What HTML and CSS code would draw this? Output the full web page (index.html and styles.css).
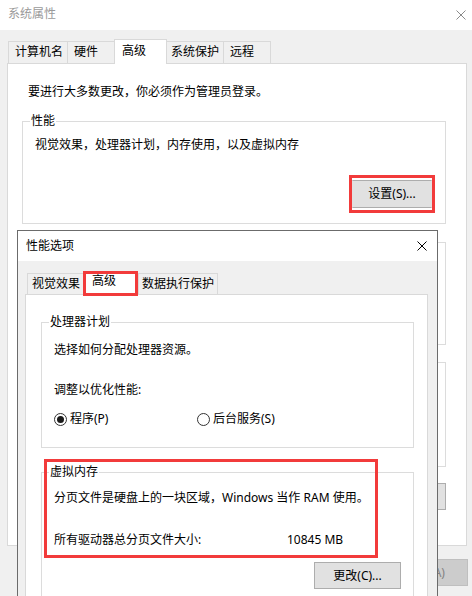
FILE: index.html
```html
<!DOCTYPE html>
<html lang="zh-CN">
<head>
<meta charset="utf-8">
<title>系统属性</title>
<link rel="stylesheet" href="styles.css">
</head>
<body>
<div class="win">
  <div class="titlebar">
    <span class="title">系统属性</span>
    <svg class="x x-dim" width="10" height="10" viewBox="0 0 10 10"><path d="M0.5 0.5L9.5 9.5M9.5 0.5L0.5 9.5"/></svg>
  </div>
  <div class="winbody">
    <div class="tabs">
      <div class="tab w1">计算机名</div>
      <div class="tab w2">硬件</div>
      <div class="tab on w3">高级</div>
      <div class="tab w4">系统保护</div>
      <div class="tab w5">远程</div>
    </div>
    <div class="panel">
      <p class="note">要进行大多数更改，你必须作为管理员登录。</p>
      <fieldset class="group">
        <legend>性能</legend>
        <div class="gbody">
          <p class="line">视觉效果，处理器计划，内存使用，以及虚拟内存</p>
          <div class="actions">
            <span class="hl"><button class="btn btn-set">设置(S)...</button></span>
          </div>
        </div>
      </fieldset>
      <div class="box box-profile"></div>
      <div class="box box-startup"></div>
      <div class="env-row">
        <button class="btn btn-env" aria-label="环境变量"></button>
      </div>
    </div>
    <div class="footer">
      <button class="btn btn-foot disabled">应用(A)</button>
    </div>
  </div>
</div>

<div class="dialog">
  <div class="dtitle">
    <span>性能选项</span>
    <svg class="x" width="10" height="10" viewBox="0 0 10 10"><path d="M0.5 0.5L9.5 9.5M9.5 0.5L0.5 9.5"/></svg>
  </div>
  <div class="dbody">
    <div class="dtabs">
      <div class="dtab d1">视觉效果</div>
      <div class="dtab hlt">高级</div>
      <div class="dtab d3">数据执行保护</div>
    </div>
    <div class="dpanel">
      <fieldset class="group">
        <legend>处理器计划</legend>
        <div class="gbody cpu">
          <p class="line">选择如何分配处理器资源。</p>
          <p class="line mt24">调整以优化性能:</p>
          <div class="radios">
            <label class="radio"><span class="rb on"></span>程序(P)</label>
            <label class="radio"><span class="rb"></span>后台服务(S)</label>
          </div>
        </div>
      </fieldset>
      <fieldset class="group mt16">
        <legend>虚拟内存</legend>
        <div class="gbody vm">
          <p class="line">分页文件是硬盘上的一块区域，Windows 当作 RAM 使用。</p>
          <div class="size-row">
            <span>所有驱动器总分页文件大小:</span>
            <span>10845 MB</span>
          </div>
          <div class="vm-actions">
            <button class="btn btn-change">更改(C)...</button>
          </div>
        </div>
      </fieldset>
    </div>
  </div>
  <div class="mark"></div>
</div>
</body>
</html>
```
FILE: styles.css
```css
* {
  box-sizing: border-box;
}

html,
body {
  margin: 0;
  padding: 0;
}

body {
  width: 472px;
  height: 596px;
  overflow: hidden;
  position: relative;
  background: #f0f0f0;
  color: #000;
  font-family: "Noto Sans", "Noto Sans CJK SC", sans-serif;
  font-size: 12px;
  line-height: 16px;
}

p {
  margin: 0;
}

.x path {
  stroke: #000;
  stroke-width: 1;
  fill: none;
}

.x-dim path {
  stroke: #8a8a8a;
}

/* background window */
.titlebar {
  height: 30px;
  background: #fff;
  display: flex;
  align-items: center;
  justify-content: space-between;
  padding: 0 6px 0 8px;
}

.title {
  color: #9a9a9a;
  margin-top: -2px;
}

.winbody {
  padding: 9px 5px 0 7px;
}

.tabs {
  display: flex;
  align-items: flex-end;
  height: 24px;
  margin-left: 1px;
}

.tab {
  height: 22px;
  border: 1px solid #d9d9d9;
  border-bottom: 0;
  background: #f0f0f0;
  padding: 2px 0 0 6px;
  margin-left: -1px;
  white-space: nowrap;
}

.tab.w1 { width: 60px; margin-left: 0; }
.tab.w2 { width: 48px; padding-left: 6px; }
.tab.w3 { width: 53px; }
.tab.w4 { width: 58px; padding-left: 4px; }
.tab.w5 { width: 48px; padding-left: 6px; }

.tab.on {
  height: 25px;
  margin-bottom: -1px;
  background: #fff;
  position: relative;
  z-index: 1;
  padding: 3px 0 0 7px;
}

.panel {
  background: #fff;
  border: 1px solid #d9d9d9;
  padding: 20px 20px 35px 14px;
}

.note {
  margin: 0 0 13px 6px;
}

fieldset.group {
  margin: 0;
  padding: 0;
  min-width: 0;
  border: 1px solid #dcdcdc;
}

fieldset.group legend {
  margin-left: 7px;
  padding: 0 1px;
  line-height: 16px;
}

.gbody {
  height: 94px;
  padding: 8px 0 0 12px;
}

fieldset.group.mt16 { margin-top: 16px; }
.line.mt24 { margin-top: 24px; }

.box {
  border: 1px solid #dcdcdc;
}

.box-profile {
  margin-top: 18px;
  height: 103px;
}

.box-startup {
  margin-top: 17px;
  height: 105px;
}

.actions {
  display: flex;
  justify-content: flex-end;
  margin-top: 22px;
  padding-right: 10px;
}

.hl {
  display: flex;
  border: 3px solid #f23b3b;
  padding: 2px 0;
}

.btn {
  font: inherit;
  color: #000;
  background: #e1e1e1;
  border: 1px solid #adadad;
  padding: 0;
  margin: 0;
  white-space: nowrap;
}

.btn-set {
  width: 80px;
  height: 28px;
}

.hl .btn-set {
  border-left-color: #e1e1e1;
  border-right-color: #e1e1e1;
}

.env-row {
  display: flex;
  justify-content: flex-end;
  margin-top: 16px;
}

.btn-env {
  width: 100px;
  height: 27px;
}

.footer {
  display: flex;
  justify-content: flex-end;
  margin: 13px -1px 0 0;
}

.btn-foot {
  width: 85px;
  height: 27px;
}

.btn-foot.disabled {
  background: #cccccc;
  border-color: #bfbfbf;
  color: #838383;
}

/* foreground dialog */
.dialog {
  position: absolute;
  left: 17px;
  top: 230px;
  width: 421px;
  height: 400px;
  border: 1px solid #6b6b6b;
  background: #f0f0f0;
}

.dtitle {
  height: 30px;
  background: #fff;
  display: flex;
  align-items: center;
  justify-content: space-between;
  padding: 0 10px 0 8px;
}

.dbody {
  padding: 10px 9px 0 7px;
}

.dtabs {
  display: flex;
  align-items: flex-end;
  height: 23px;
  margin-left: 2px;
}

.dtab {
  height: 21px;
  border: 1px solid #d9d9d9;
  border-bottom: 0;
  background: #f0f0f0;
  padding: 2px 0 0 4px;
  white-space: nowrap;
}

.dtab.d1 { width: 57px; }
.dtab.d3 { width: 80px; padding-left: 3px; }

.dtab.hlt {
  width: 55px;
  height: 25px;
  margin: 0 0 -2px -1px;
  border: 3px solid #f23b3b;
  background: #fff;
  padding: 1px 0 0 6px;
  line-height: 12px;
  position: relative;
  z-index: 1;
}

.dpanel {
  background: #fff;
  border: 1px solid #d9d9d9;
  padding: 19px 13px 60px 15px;
}

.gbody.cpu {
  height: auto;
  padding: 12px 0 20px 12px;
}

.radios {
  display: grid;
  grid-template-columns: 143px auto;
  margin-top: 13px;
}

.radio {
  display: flex;
  align-items: center;
  gap: 3px;
}

.rb {
  width: 13px;
  height: 13px;
  border: 1px solid #333;
  border-radius: 50%;
  background: #fff;
  display: flex;
  align-items: center;
  justify-content: center;
}

.rb.on::after {
  content: "";
  width: 7px;
  height: 7px;
  border-radius: 50%;
  background: #1a1a1a;
}

.gbody.vm {
  height: auto;
  padding: 10px 12px 20px 12px;
}

.size-row {
  display: grid;
  grid-template-columns: 233px auto;
  margin-top: 26px;
}

.vm-actions {
  display: flex;
  justify-content: flex-end;
  margin-top: 14px;
}

.btn-change {
  width: 87px;
  height: 27px;
}

.mark {
  position: absolute;
  left: 26px;
  top: 228px;
  width: 334px;
  height: 99px;
  border: 3px solid #f23b3b;
  pointer-events: none;
}
```
